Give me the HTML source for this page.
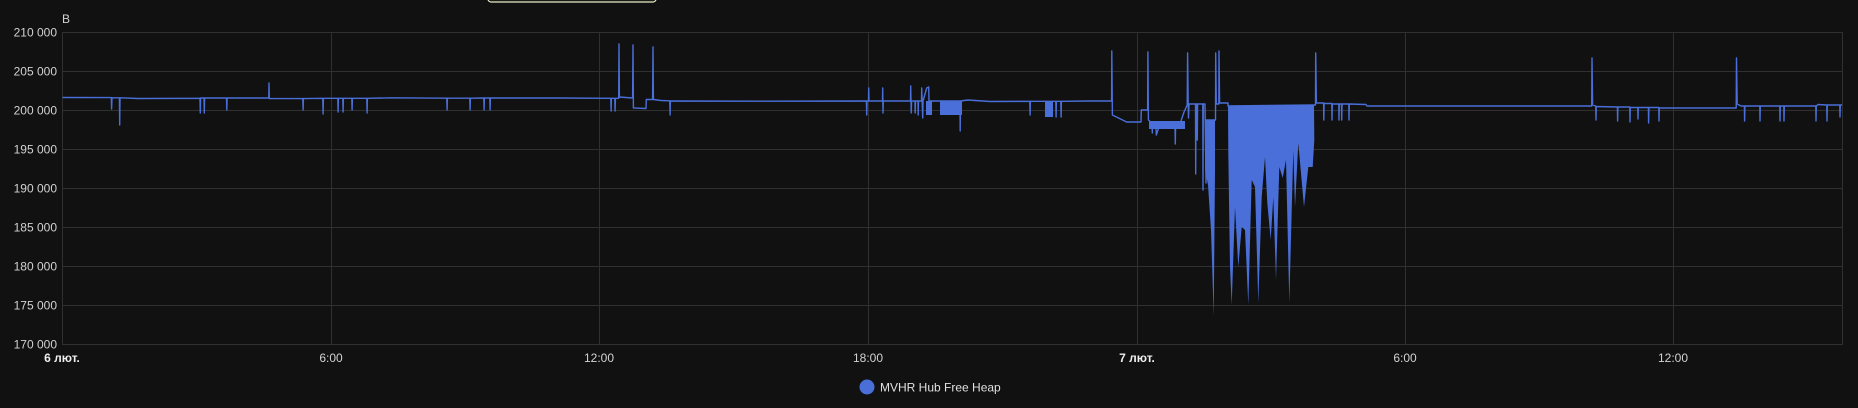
<!DOCTYPE html>
<html><head><meta charset="utf-8"><style>
html,body{margin:0;padding:0;background:#111111;width:1858px;height:408px;overflow:hidden}
svg{display:block}
text{font-family:"Liberation Sans",sans-serif;font-size:12px;fill:#d2d2d2}
</style></head><body>
<svg width="1858" height="408" viewBox="0 0 1858 408" xmlns="http://www.w3.org/2000/svg">
<rect x="488" y="-4" width="168" height="6" rx="3" fill="#1a1a14" stroke="#e6ecc6" stroke-width="1.2"/>
<g stroke="#303030" stroke-width="1">
<line x1="62.5" y1="32.5" x2="1842" y2="32.5"/>
<line x1="62.5" y1="71.5" x2="1842" y2="71.5"/>
<line x1="62.5" y1="110.5" x2="1842" y2="110.5"/>
<line x1="62.5" y1="149.5" x2="1842" y2="149.5"/>
<line x1="62.5" y1="188.5" x2="1842" y2="188.5"/>
<line x1="62.5" y1="227.5" x2="1842" y2="227.5"/>
<line x1="62.5" y1="266.5" x2="1842" y2="266.5"/>
<line x1="62.5" y1="305.5" x2="1842" y2="305.5"/>
<line x1="62.5" y1="344.5" x2="1842" y2="344.5"/>
<line x1="62.5" y1="32" x2="62.5" y2="345"/>
<line x1="331.5" y1="32" x2="331.5" y2="345"/>
<line x1="599.5" y1="32" x2="599.5" y2="345"/>
<line x1="868.5" y1="32" x2="868.5" y2="345"/>
<line x1="1137.5" y1="32" x2="1137.5" y2="345"/>
<line x1="1405.5" y1="32" x2="1405.5" y2="345"/>
<line x1="1673.5" y1="32" x2="1673.5" y2="345"/>
<line x1="1842.5" y1="32" x2="1842.5" y2="345"/>
</g>
<g text-anchor="end">
<text x="57" y="36.5">210 000</text>
<text x="57" y="75.5">205 000</text>
<text x="57" y="114.5">200 000</text>
<text x="57" y="153.5">195 000</text>
<text x="57" y="192.5">190 000</text>
<text x="57" y="231.5">185 000</text>
<text x="57" y="270.5">180 000</text>
<text x="57" y="309.5">175 000</text>
<text x="57" y="348.5">170 000</text>
</g>
<text x="62" y="23">B</text>
<g text-anchor="middle">
<text x="62" y="362" style="font-weight:bold;fill:#eee">6 лют.</text>
<text x="331" y="362">6:00</text>
<text x="599" y="362">12:00</text>
<text x="868" y="362">18:00</text>
<text x="1137" y="362" style="font-weight:bold;fill:#eee">7 лют.</text>
<text x="1405" y="362">6:00</text>
<text x="1673" y="362">12:00</text>
</g>
<circle cx="867" cy="387" r="7.5" fill="#4a6fd8"/>
<text x="880" y="391.5" style="fill:#e0e0e0">MVHR Hub Free Heap</text>
<g fill="#4a6fd8" stroke="none">
<polygon points="1228,105.5 1314,105 1314.3,140 1312.7,167 1308.3,167 1304,207 1298.3,143 1295,207 1293.3,150 1289.3,303 1286,160 1282.7,178 1279.3,167 1276,280 1273.3,197 1270.7,240 1267.3,203 1265,157 1261.7,197 1258.3,303 1255,187 1251.7,180 1248.3,305 1245,230 1241.7,227 1238.3,267 1235,207 1231.7,305 1230,267 1228.3,153"/>
<polygon points="1205,120 1215,120 1215,170 1213.7,316 1211,230 1208,185 1205,170"/>
<rect x="926" y="101" width="6" height="14"/>
<rect x="940" y="101" width="22" height="14"/>
<rect x="1045" y="101" width="8" height="16"/>
<rect x="1149" y="121" width="36" height="8"/>
</g>
<path fill="none" stroke="#4a6fd8" stroke-width="1.4" stroke-linejoin="round" d="
M62.5 97.5 L111.3 97.6 L111.6 109 L112 97.8 L119.4 97.8 L119.7 125 L120 97.8 L138 98.5 L200 98.3 L200.3 113 L200.6 98 L204 98 L204.3 113 L204.6 98 L226.5 98 L226.8 110 L227.1 98 L268.8 98 L269 83 L269.3 98.5 L302.8 98.6 L303.1 110 L303.4 98.6 L322.8 98.3 L323.1 114 L323.4 98.3 L337.8 98.3 L338.1 112 L338.4 98.3 L342.8 98.3 L343.1 112 L343.4 98.3 L351.8 98.3 L352.1 110 L352.4 98.3 L366.8 98.3 L367.1 113 L367.4 98.3 L392 97.8 L446.8 98.2 L447.1 110 L447.4 98.2 L469.8 98.2 L470.1 110 L470.4 98.2 L483.8 98 L484.1 110 L484.4 98 L489.8 98 L490.1 110 L490.4 98 L560 98 L610.8 98.3 L611.1 111 L611.4 98.3 L614.8 98.3 L615.1 111 L615.4 98.3 L618.7 98.3 L619 44 L619.4 97 L632.6 98 L633 45 L633.4 108 L646 108.5 L646.3 99.5 L652.6 99.5 L653 47 L653.4 99.5 L661 100.5 L669.8 100.8 L670.1 115 L670.4 101 L760 101.2 L866.4 101 L866.7 115 L867 101 L868.5 101 L868.7 88 L869 101 L882.5 101 L882.7 88 L883 113 L883.3 101 L910.5 101 L910.7 86 L911.2 113 L911.6 101 L915 101 L915.2 113 L915.5 101 L918 101 L918.2 115 L918.5 101 L921.5 101 L921.7 88 L922.7 118 L923 101 L926.7 88 L928.7 87 L929 101 L960 101 L960.2 131 L960.5 101 L968 100 L990 101.5 L1029.8 101.3 L1030.1 115 L1030.4 101.3 L1055.8 101.3 L1056.1 117 L1056.4 101.3 L1060.8 101.3 L1061.1 117 L1061.4 101.3 L1090 101 L1111.6 101 L1111.8 51 L1112.4 115 L1126.6 122 L1141 122 L1141.3 110 L1147.6 110 L1147.9 52 L1148.4 120 L1152 123 L1152.3 133 L1152.6 122 L1156 126 L1156.3 135 L1160 124 L1165 126 L1167 124 L1175 126 L1175.3 144 L1175.6 124 L1180 124 L1184 112 L1187.2 105 L1187.6 53 L1188.2 104 L1188.5 118 L1189 104 L1195.5 104 L1195.7 174 L1196 104 L1197 104 L1197.3 140 L1197.6 104 L1202.8 104 L1203 190 L1203.3 104 L1205 104 L1206 183 L1206.3 120 L1215.5 120 L1215.7 53 L1216.3 104 L1218.8 104 L1219 51 L1219.6 103 L1228 103 L1228 106 L1314 105 L1315.5 105 L1315.7 53 L1316.4 103 L1323.6 103 L1323.8 120 L1324.1 103.5 L1331.8 103.5 L1332 120 L1332.3 104 L1338.8 104 L1339 120 L1339.3 104 L1341.5 104 L1341.7 120 L1342 104 L1348.8 104 L1349 120 L1349.3 104 L1366 104.5 L1367 106 L1591.7 106 L1592 58 L1592.6 105 L1595.8 106 L1596 120 L1596.3 106.5 L1617.4 107 L1617.6 121 L1617.9 107 L1629.8 107 L1630 122 L1630.3 107.5 L1637.8 107.5 L1638 119 L1638.3 107.5 L1648.4 107.5 L1648.6 123 L1648.9 107.5 L1658.8 107.5 L1659 121 L1659.3 108 L1736.2 108 L1736.5 58 L1737.2 104 L1741 106 L1744.4 106 L1744.6 121 L1744.9 106 L1759.8 106 L1760 121 L1760.3 106 L1779.8 106 L1780 121 L1780.3 106 L1783.8 106 L1784 121 L1784.3 106 L1815.8 106 L1816 121 L1816.3 106 L1818 104.5 L1826.8 105 L1827 121 L1827.3 105 L1839.8 105 L1840 117 L1840.3 105 L1842 105"/>
</svg>
</body></html>
